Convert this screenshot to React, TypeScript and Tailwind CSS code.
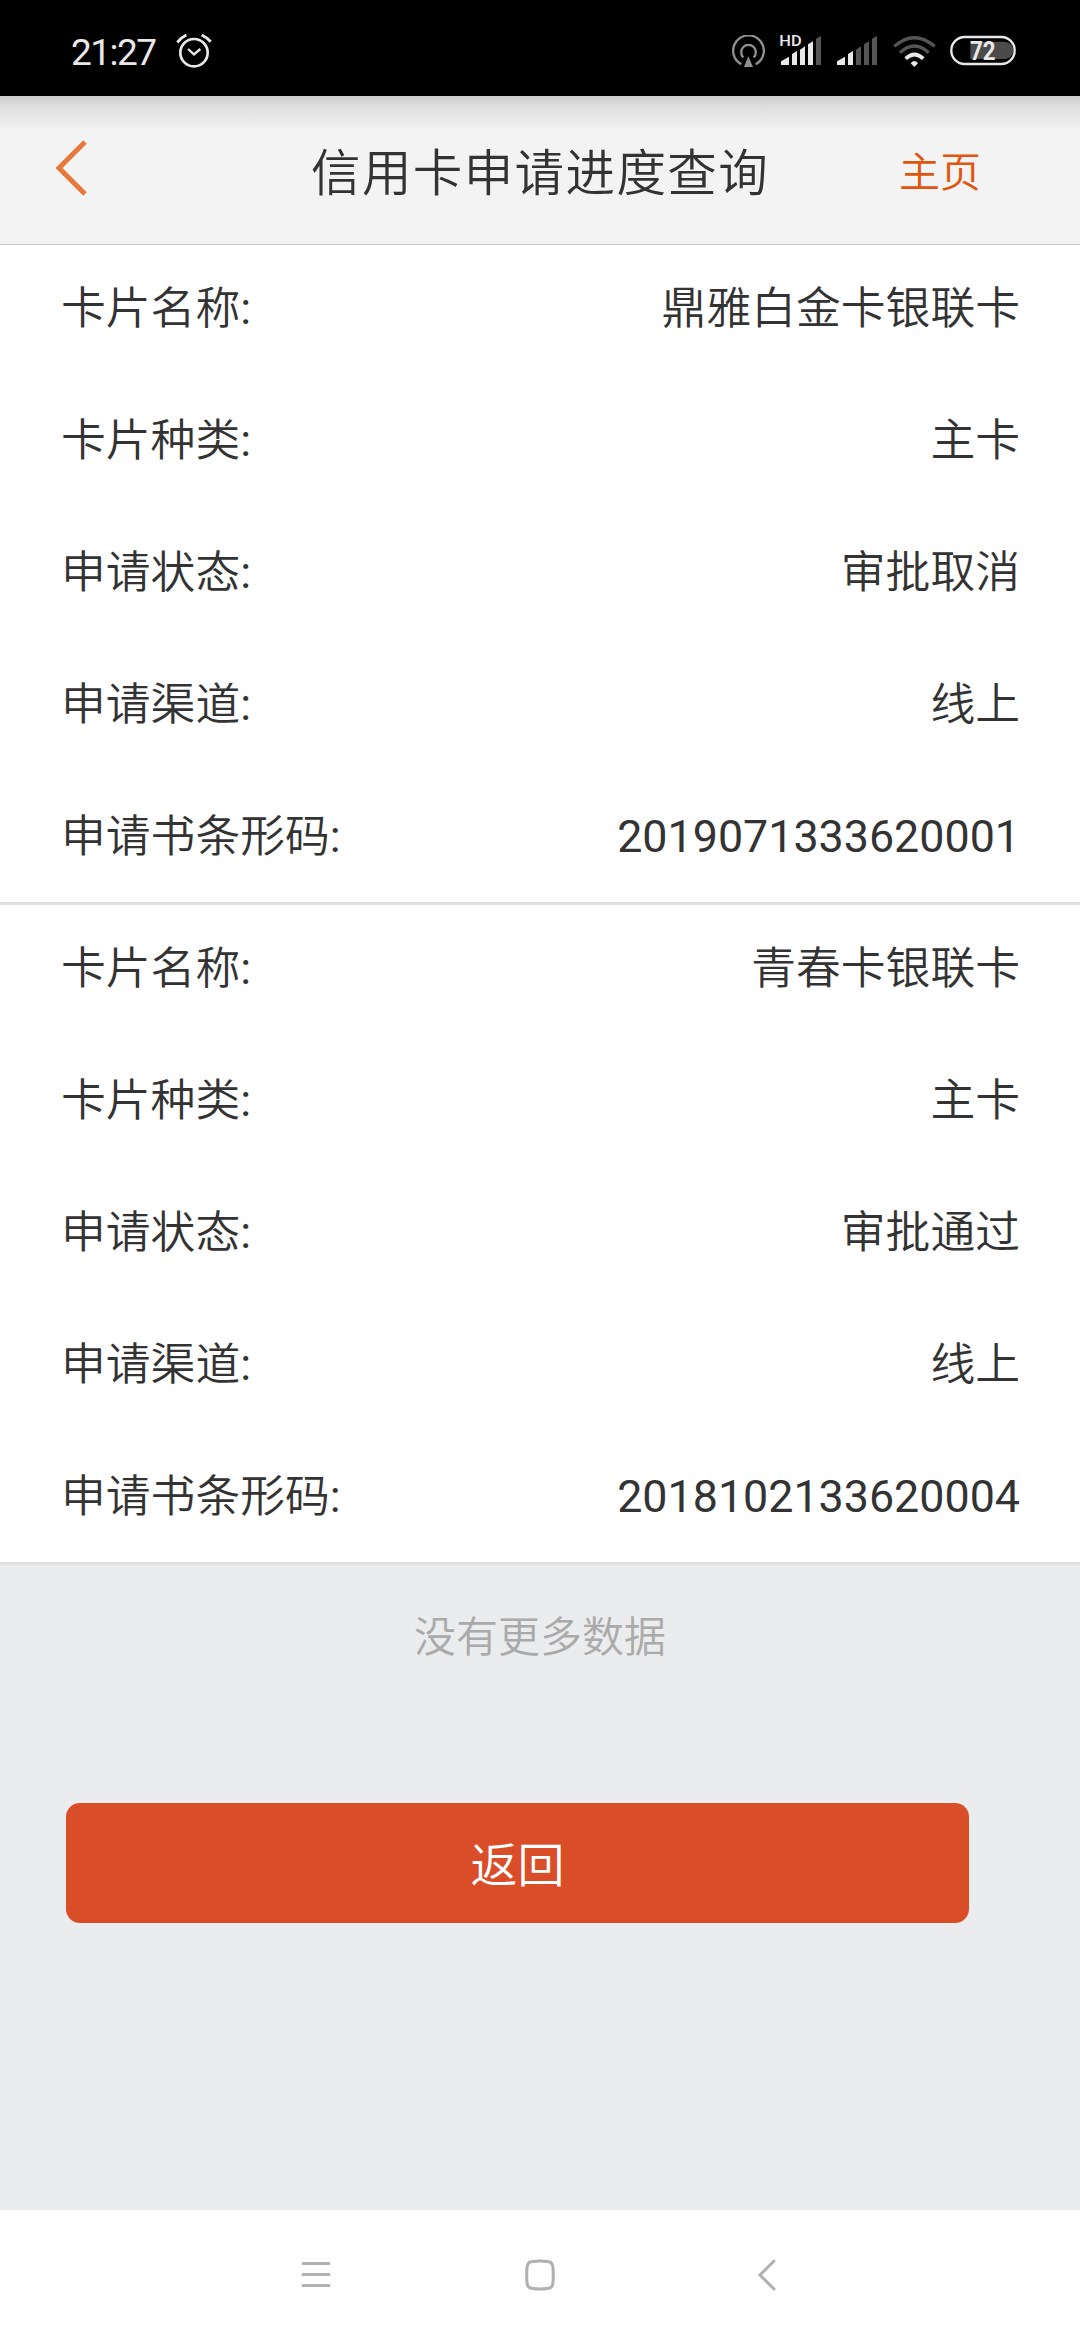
import type { ReactNode } from "react";

type Application = {
  name: string;
  kind: string;
  status: string;
  channel: string;
  barcode: string;
};

const applications: Application[] = [
  { name: "鼎雅白金卡银联卡", kind: "主卡", status: "审批取消", channel: "线上", barcode: "2019071333620001" },
  { name: "青春卡银联卡", kind: "主卡", status: "审批通过", channel: "线上", barcode: "2018102133620004" },
];

function StatusBar() {
  return (
    <div className="flex h-24 shrink-0 items-start justify-between bg-black pl-[71px] pr-[64px] text-[#e8e8e8]">
      <div className="flex items-start">
        <span className="mt-[31px] w-[105px] text-[37px] leading-[44px] tracking-[-1.5px]">21:27</span>
        {/* Alarm */}
        <svg className="mt-[33px] h-9 w-9" viewBox="0 0 108 108" fill="none" stroke="currentColor" strokeWidth="8">
          <circle cx="54" cy="59" r="41" />
          <path d="M36 48 54 64 73 48" strokeWidth="7" />
          <path d="M4 28Q14 14 31 6M77 6Q94 14 104 26" strokeWidth="9" />
        </svg>
      </div>
      <div className="flex items-start pt-[35px]">
        {/* Hotspot */}
        <svg className="h-[33px] w-[33px]" viewBox="66 75 99 99" fill="none" stroke="#909090" strokeWidth="7">
          <path d="M94 163A46 46 0 1 1 137 163" />
          <path d="M100 142A22 22 0 1 1 131 142" />
          <path d="M115 139 129 171H102Z" fill="#909090" stroke="none" />
        </svg>
        {/* SIM 1 */}
        <svg className="ml-[14px] h-[36px] w-[43px] -mt-[3px]" viewBox="207 66 129 108" fill="currentColor">
          <text x="208" y="108" fontSize="46" fontWeight="500" textLength="67" lengthAdjust="spacingAndGlyphs">HD</text>
          <path d="M213 154 237 140V165H213ZM246 132 261 123V165H246ZM270 119 285 109V165H270ZM294 103 309 94V165H294Z" />
          <path d="M318 86 333 77V165H318Z" fill="#555" />
        </svg>
        {/* SIM 2 */}
        <svg className="ml-[15px] h-[33px] w-[41px]" viewBox="381 75 123 99" fill="currentColor">
          <path d="M381 154 405 140V165H381ZM414 132 429 123V165H414Z" />
          <path d="M438 119 453 109V165H438ZM462 103 477 94V165H462ZM486 86 501 77V165H486Z" fill="#555" />
        </svg>
        {/* Wi-Fi */}
        <svg className="ml-[15px] h-[33px] w-[43px]" viewBox="548 75 129 99" fill="none" strokeWidth="10">
          <path d="M552 109Q612 57 673 109" stroke="#555" />
          <path d="M569 128Q612 88 655 128" stroke="#555" />
          <path d="M586 146Q612 121 639 146" stroke="currentColor" strokeWidth="11" />
          <path d="M601 160Q612 146 623 160L612 171Z" fill="currentColor" />
        </svg>
        {/* Battery */}
        <svg className="ml-[14px] h-[33px] w-[66px]" viewBox="719 75 198 99">
          <path d="M780 95H883A26 26 0 0 1 883 147H780Z" fill="#4b4b4b" />
          <rect x="723" y="81" width="190" height="81" rx="40" fill="none" stroke="currentColor" strokeWidth="7" />
          <text x="779" y="149" fontSize="76" fontWeight="700" fill="currentColor" textLength="77" lengthAdjust="spacingAndGlyphs">72</text>
        </svg>
      </div>
    </div>
  );
}

function Header() {
  return (
    <header className="flex h-[149px] shrink-0 items-center border-b border-[#cbcbcb] bg-[#f3f3f3] bg-[linear-gradient(to_bottom,#cbcbcb,#dedede_10px,#e9e9e9_24px,#f3f3f3_34px)]">
      <div className="w-[311px] pl-[55px]">
        <svg className="mb-1 h-14 w-8" viewBox="0 0 32 56" fill="none" stroke="#e8793a" strokeWidth="5">
          <path d="M30 2 4 28 30 54" />
        </svg>
      </div>
      <h1 className="w-[588px] pt-[9px] font-[350] text-[49.5px] leading-none tracking-[1.4px]">信用卡申请进度查询</h1>
      <a className="pt-1.5 font-[350] text-[41px] leading-none text-[#e0560f]">主页</a>
    </header>
  );
}

function Row({ label, children }: { label: string; children: ReactNode }) {
  return (
    <div className="flex h-[132px] items-start justify-between pt-[34px] pr-[60px] pl-[61px] leading-[60px]">
      <span className="font-[350]">
        {label}
        <span className="font-normal">:</span>
      </span>
      {children}
    </div>
  );
}

function ApplicationCard({ item }: { item: Application }) {
  return (
    <section className="h-[660px] overflow-hidden border-b-[3px] border-[#e0e0e0] bg-white text-[44.8px]">
      <Row label="卡片名称">
        <span className="font-[350]">{item.name}</span>
      </Row>
      <Row label="卡片种类">
        <span className="font-[350]">{item.kind}</span>
      </Row>
      <Row label="申请状态">
        <span className="font-[350]">{item.status}</span>
      </Row>
      <Row label="申请渠道">
        <span className="font-[350]">{item.channel}</span>
      </Row>
      <Row label="申请书条形码">
        <span>{item.barcode}</span>
      </Row>
    </section>
  );
}

function NavBar() {
  return (
    <nav className="flex h-[130px] shrink-0 items-center bg-[#fefefe] pl-[301px]">
      <svg className="h-9 w-[30px]" viewBox="0 0 30 36" fill="none" stroke="#b0b0b0" strokeWidth="3" strokeLinecap="round">
        <path d="M2 6.500H28M2 17.500H28M2 28.500H28" />
      </svg>
      <svg className="ml-[194px] h-9 w-[30px]" viewBox="0 0 30 36" fill="none" stroke="#b0b0b0" strokeWidth="3">
        <path d="M8 4.5Q15 3.5 22 4.5Q27.500 4.500 28 10.500Q28.500 18 28 25.500Q27.500 31.500 22 31.500Q15 32.500 8 31.500Q2.500 31.500 2 25.500Q1.500 18 2 10.500Q2.500 4.500 8 4.500Z" />
      </svg>
      <svg className="ml-[202px] h-9 w-5" viewBox="0 0 20 36" fill="none" stroke="#b0b0b0" strokeWidth="3" strokeLinecap="round">
        <path d="M17 4 3 18 17 32" />
      </svg>
    </nav>
  );
}

export default function App() {
  return (
    <div className="flex h-[2340px] w-[1080px] flex-col overflow-hidden bg-[#ebeced] font-[Roboto,'Noto_Sans_CJK_SC',sans-serif] text-[#333]">
      <StatusBar />
      <Header />
      <main className="flex-1">
        {applications.map((item) => (
          <ApplicationCard key={item.barcode} item={item} />
        ))}
        <p className="mt-[43px] text-center font-[350] text-[42px] leading-[60px] text-[#aaa]">没有更多数据</p>
        <button className="ml-[66px] mt-[135px] block h-[120px] w-[903px] rounded-[14px] bg-[#da4d29] pt-1 font-[350] text-[47px] leading-none text-white">
          返回
        </button>
      </main>
      <NavBar />
    </div>
  );
}
